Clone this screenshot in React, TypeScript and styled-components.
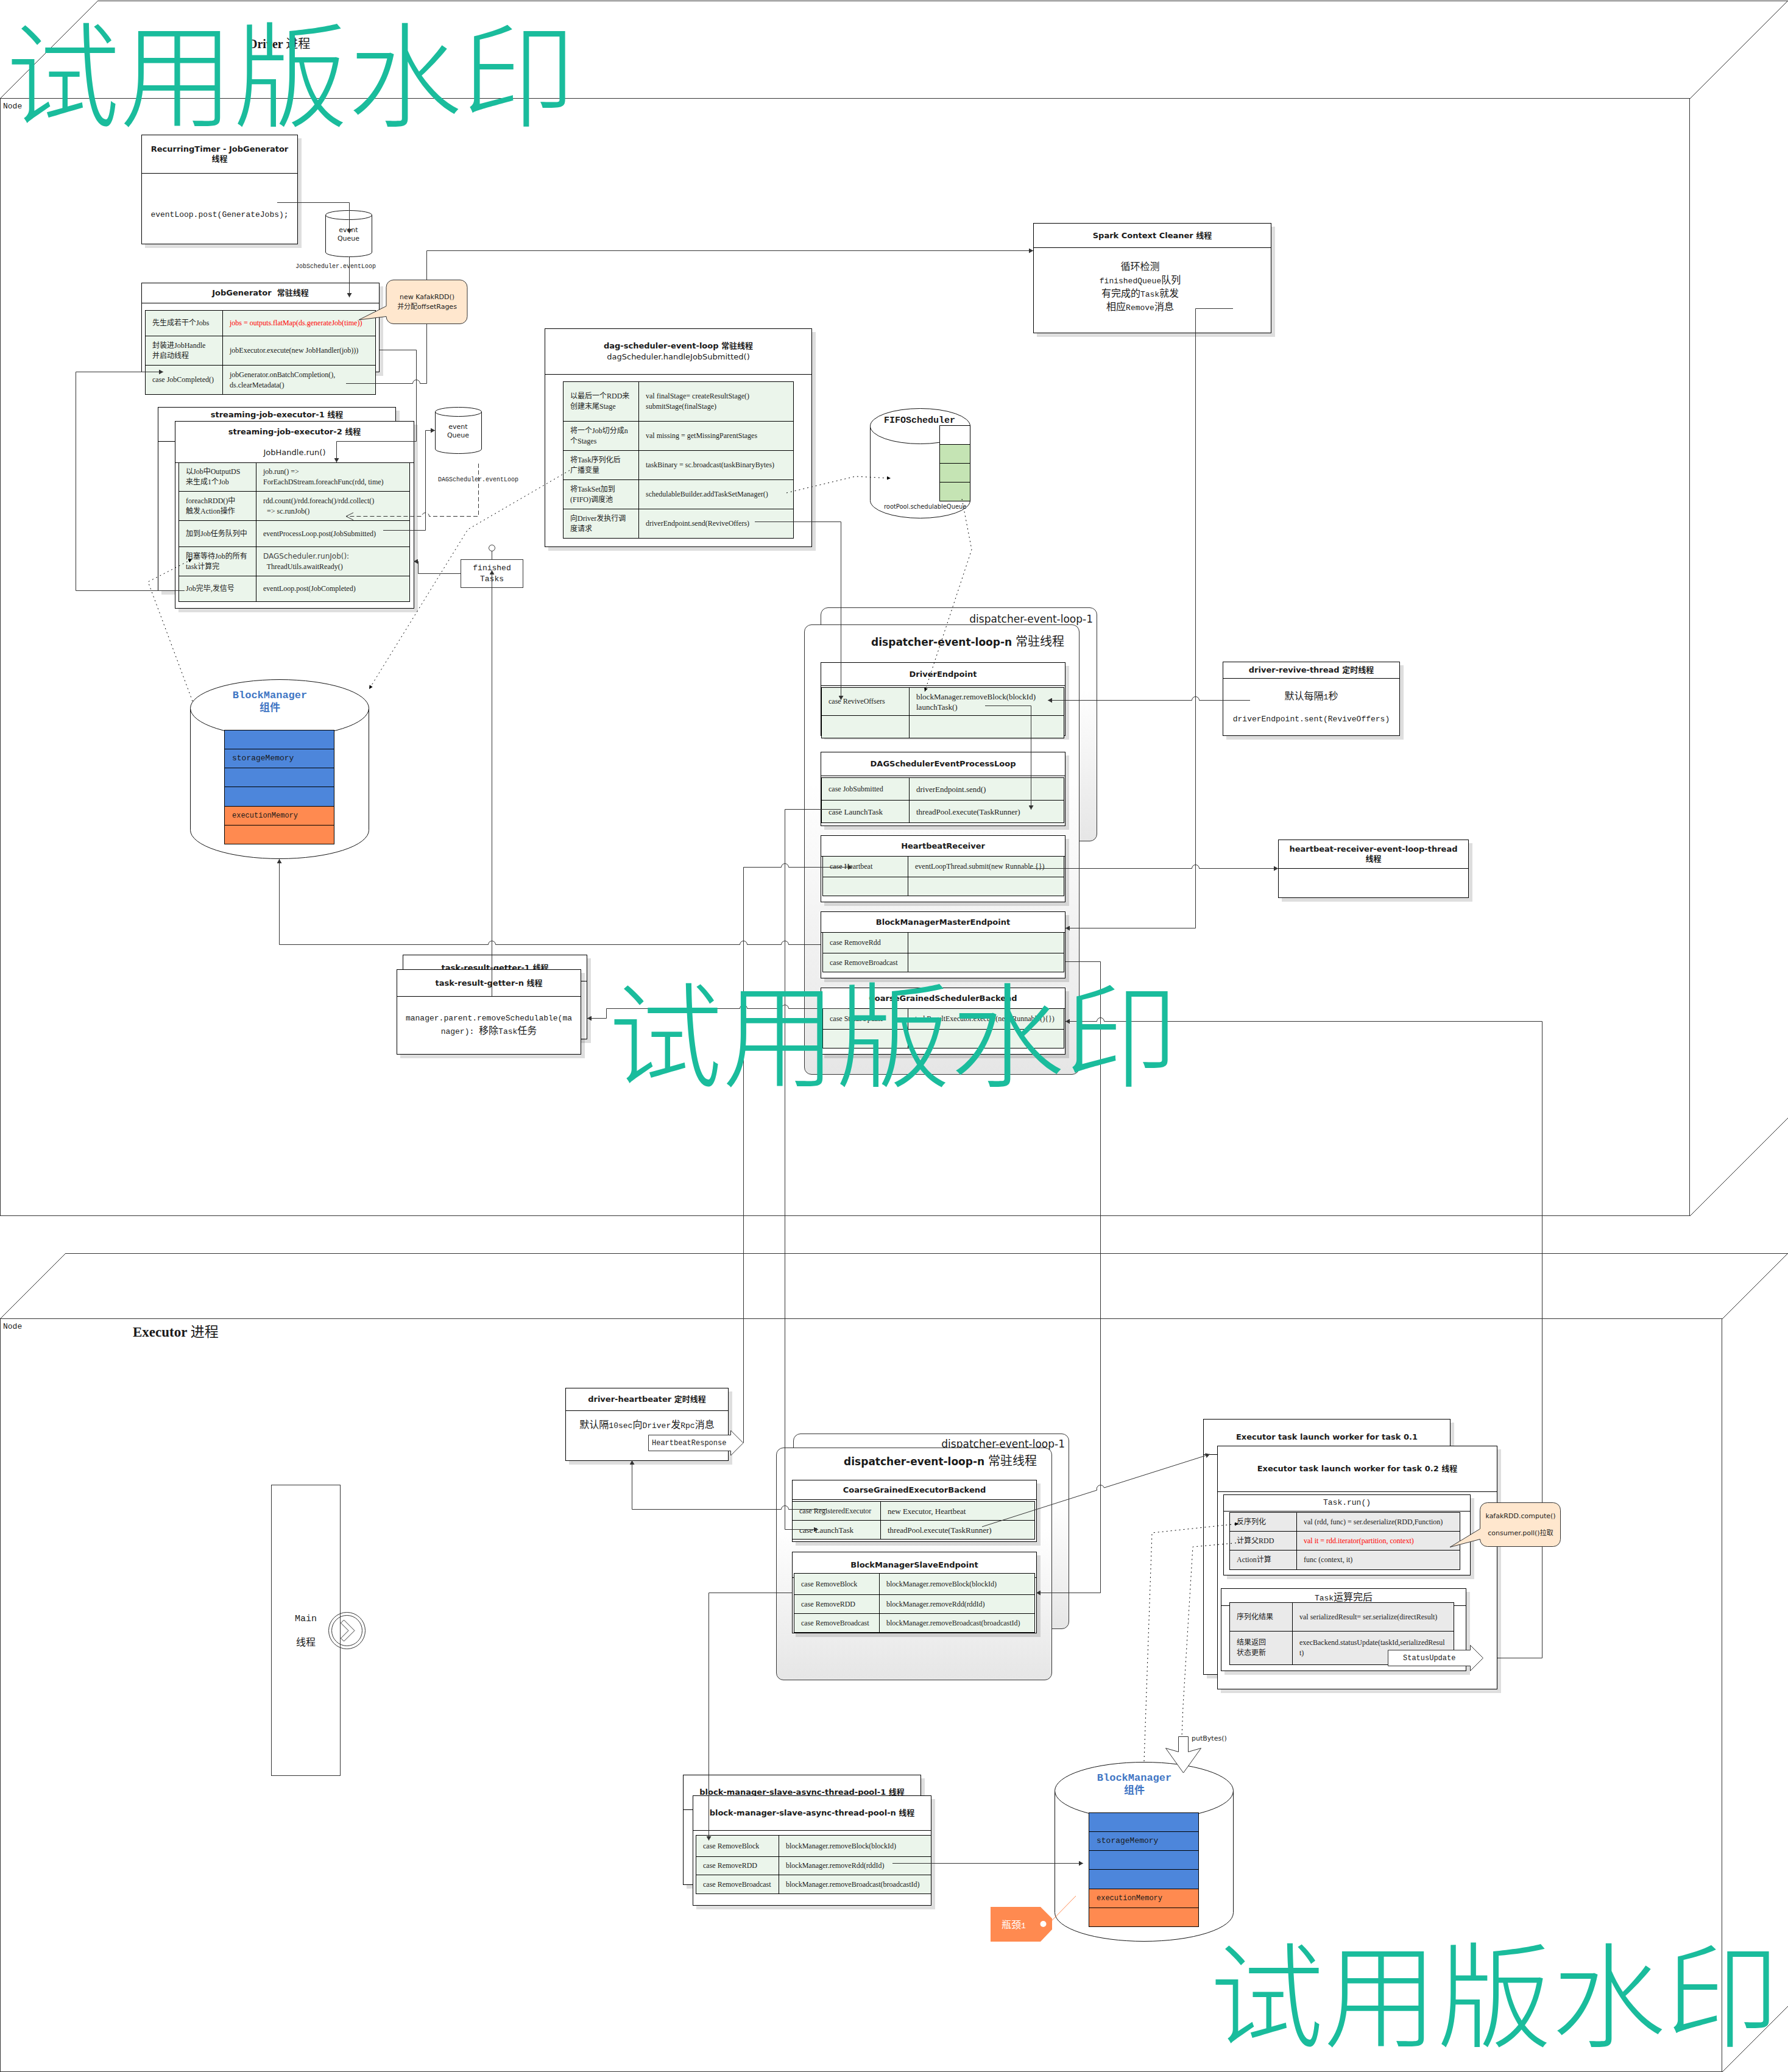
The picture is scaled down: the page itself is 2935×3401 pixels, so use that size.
import React, { ReactNode } from "react";
import styled, { createGlobalStyle, css } from "styled-components";

const ink = "#1a1a1a";
const wire = "#333333";
const mint = "#ebf5eb";
const grey = "#eaeaea";

const cjk = `"Noto Sans CJK SC"`;
const serif = `"Liberation Serif", ${cjk}, serif`;
const mono = `"Liberation Mono", ${cjk}, monospace`;
const sans = `"DejaVu Sans", ${cjk}, sans-serif`;

const GlobalStyle = createGlobalStyle`
  * { box-sizing: border-box; }
  body { margin: 0; background: #fff; color: ${ink}; overflow-x: auto; }
  h1, h2, h3, p { margin: 0; font-weight: normal; }
`;

type Box = { $x: number; $y: number; $w?: number; $h?: number };

const placed = css<Box>`
  position: absolute;
  left: ${(p) => p.$x}px;
  top: ${(p) => p.$y}px;
  ${(p) => p.$w !== undefined && `width: ${p.$w}px;`}
  ${(p) => p.$h !== undefined && `height: ${p.$h}px;`}
`;

/* ---------- process boxes drawn as cubes ---------- */

const Canvas = styled.main`
  position: relative;
  display: flex;
  flex-direction: column;
  gap: 60px;
  min-width: 2600px;
`;

const Cube = styled.section<{ $depth: number }>`
  position: relative;
  padding: ${(p) => p.$depth}px ${(p) => p.$depth}px 0 0;
`;

const Lid = styled.div<{ $depth: number }>`
  position: absolute;
  top: 1px;
  left: ${(p) => p.$depth}px;
  right: 0;
  border-top: 1px solid ${wire};
`;

const Front = styled.div<{ $h: number }>`
  height: ${(p) => p.$h}px;
  padding: 4px;
  border: 1px solid ${wire};
`;

const Slant = styled.svg<{ $side: "left" | "right"; $bottom?: boolean }>`
  position: absolute;
  ${(p) => (p.$side === "left" ? "left: 0;" : "right: 0;")}
  ${(p) => (p.$bottom ? "bottom: 0;" : "top: 1px;")}
`;

const NodeTag = styled.p`
  font: 13px/18px ${mono};
`;

const ProcessTitle = styled.h1<Box & { $size: number }>`
  ${placed}
  font: bold ${(p) => p.$size}px/28px ${serif};
  white-space: nowrap;
`;

const Plain = styled.span`
  font-weight: normal;
`;

function Process({ depth, height }: { depth: number; height: number }) {
  const edge = (
    <line x1="0" y1={depth} x2={depth} y2="0" stroke={wire} />
  );
  return (
    <Cube $depth={depth}>
      <Lid $depth={depth} />
      <Slant $side="left" width={depth} height={depth}>{edge}</Slant>
      <Slant $side="right" width={depth} height={depth}>{edge}</Slant>
      <Front $h={height}>
        <NodeTag>Node</NodeTag>
      </Front>
      <Slant $side="right" $bottom width={depth} height={depth}>{edge}</Slant>
    </Cube>
  );
}

/* ---------- text ---------- */

const Cn = styled.span<{ $size?: number }>`
  font-family: ${cjk}, sans-serif;
  font-size: ${(p) => p.$size ?? 16}px;
`;

const Label = styled.p<Box & { $font: string; $size: number; $line?: number; $align?: string; $bold?: boolean; $color?: string }>`
  ${placed}
  font-family: ${(p) => p.$font};
  font-size: ${(p) => p.$size}px;
  line-height: ${(p) => p.$line ?? 16}px;
  font-weight: ${(p) => (p.$bold ? "bold" : "normal")};
  text-align: ${(p) => p.$align ?? "center"};
  color: ${(p) => p.$color ?? ink};
  white-space: pre;
`;

/* ---------- class cards ---------- */

const CardBox = styled.article<Box>`
  ${placed}
  display: flex;
  flex-direction: column;
  background: #fff;
  border: 1px solid #000;
  box-shadow: 6px 6px 0 rgba(0, 0, 0, 0.13);
`;

const CardHead = styled.header<{ $h: number; $gap: number; $top?: boolean }>`
  display: flex;
  flex: none;
  flex-direction: column;
  align-items: center;
  justify-content: ${(p) => (p.$top ? "flex-start" : "center")};
  gap: ${(p) => p.$gap}px;
  height: ${(p) => p.$h}px;
  padding-top: ${(p) => (p.$top ? 4 : 0)}px;
  border-bottom: 1px solid #000;
  text-align: center;
  font: 13px/16px ${sans};
  white-space: pre;
`;

const CardTitle = styled.h3<{ $mono?: boolean }>`
  font: ${(p) => (p.$mono ? `13px/16px ${mono}` : `bold 13px/16px ${sans}`)};
`;

const CardBody = styled.div<{ $pad?: string; $top?: boolean }>`
  display: flex;
  flex: 1;
  flex-direction: column;
  align-items: center;
  justify-content: ${(p) => (p.$top ? "flex-start" : "center")};
  gap: 18px;
  padding: ${(p) => p.$pad ?? "0"};
  font: 13px/18px ${mono};
  text-align: center;
  white-space: pre;
`;

type CardProps = {
  x: number;
  y: number;
  w: number;
  h: number;
  head: number;
  title: ReactNode;
  sub?: string;
  gap?: number;
  topTitle?: boolean;
  monoTitle?: boolean;
  children?: ReactNode;
};

function Card(p: CardProps) {
  return (
    <CardBox $x={p.x} $y={p.y} $w={p.w} $h={p.h}>
      <CardHead $h={p.head} $gap={p.gap ?? 2} $top={p.topTitle}>
        <CardTitle $mono={p.monoTitle}>{p.title}</CardTitle>
        {p.sub && <p>{p.sub}</p>}
      </CardHead>
      {p.children}
    </CardBox>
  );
}

/* ---------- step tables ---------- */

const Grid = styled.table<{ $w: number; $left: number; $top: number; $fill: string }>`
  flex: none;
  width: ${(p) => p.$w}px;
  margin: ${(p) => p.$top}px 0 0 ${(p) => p.$left}px;
  table-layout: fixed;
  border-collapse: separate;
  border-spacing: 0;
  border: solid #000;
  border-width: 1px 0 0 1px;
  background: ${(p) => p.$fill};
`;

const Row = styled.tr<{ $h: number }>`
  height: ${(p) => p.$h}px;
`;

const Cell = styled.td<{ $w?: number; $big?: boolean; $red?: boolean; $sansFirst?: boolean }>`
  ${(p) => p.$w !== undefined && `width: ${p.$w}px;`}
  padding: 0 0 0 11px;
  border: solid #000;
  border-width: 0 1px 1px 0;
  font: ${(p) => (p.$big ? 13 : 12)}px/17px ${serif};
  color: ${(p) => (p.$red ? "#ff0000" : ink)};
  vertical-align: middle;
  white-space: pre;
  ${(p) => p.$sansFirst && `&::first-line { font-family: "DejaVu Sans", sans-serif; color: #444; }`}
`;

type Step = { h: number; a?: string; b?: string; bigA?: boolean; bigB?: boolean; red?: boolean; sansFirst?: boolean };

function Steps({ w, col, left = 0, top = 0, fill = mint, rows }: { w: number; col: number; left?: number; top?: number; fill?: string; rows: Step[] }) {
  return (
    <Grid $w={w} $left={left} $top={top} $fill={fill}>
      <tbody>
        {rows.map((r, i) => (
          <Row key={i} $h={r.h}>
            <Cell $w={col} $big={r.bigA}>{r.a}</Cell>
            <Cell $big={r.bigB} $red={r.red} $sansFirst={r.sansFirst}>{r.b}</Cell>
          </Row>
        ))}
      </tbody>
    </Grid>
  );
}

/* ---------- dispatcher groups ---------- */

const Group = styled.section<Box & { $pad: string }>`
  ${placed}
  padding: ${(p) => p.$pad};
  border: 1px solid ${wire};
  border-radius: 12px;
  background: linear-gradient(#fff 35%, #e6e6e6);
  text-align: right;
  white-space: nowrap;
`;

const GroupTitle = styled.h2<{ $bold?: boolean }>`
  font: ${(p) => (p.$bold ? "bold" : "normal")} 17px/24px ${sans};
`;

/* ---------- cylinders and memory racks ---------- */

const Shape = styled.svg<Box>`
  ${placed}
  overflow: visible;
`;

function Cylinder({ x, y, w, h, ry }: { x: number; y: number; w: number; h: number; ry: number }) {
  const rx = w / 2;
  return (
    <Shape $x={x} $y={y} $w={w} $h={h} viewBox={`-0.5 -0.5 ${w} ${h}`} fill="#fff" stroke="#111">
      <path d={`M0 ${ry} V${h - ry} A${rx} ${ry} 0 0 0 ${w} ${h - ry} V${ry}`} />
      <ellipse cx={rx} cy={ry} rx={rx} ry={ry} />
    </Shape>
  );
}

const Rack = styled.div<Box>`
  ${placed}
  display: grid;
  grid-auto-rows: 1fr;
  border: solid #000;
  border-width: 1px 1px 0;
`;

const Slot = styled.div<{ $fill: string; $size?: number }>`
  display: flex;
  align-items: center;
  padding-left: 12px;
  border-bottom: 1px solid #000;
  background: ${(p) => p.$fill};
  font: ${(p) => p.$size ?? 13}px/16px ${mono};
`;

const blue = "#4d86db";
const orange = "#ff8a50";

function BlockManager({ x, y }: { x: number; y: number }) {
  return (
    <>
      <Cylinder x={x} y={y} w={293} h={294} ry={47} />
      <Label $x={x + 31} $y={y + 18} $w={200} $font={mono} $size={17} $line={18} $bold $color="#3f76c4">
        BlockManager{"\n"}<Cn $size={17}>组件</Cn>
      </Label>
      <Rack $x={x + 56} $y={y + 83} $w={181} $h={188}>
        <Slot $fill={blue} />
        <Slot $fill={blue}>storageMemory</Slot>
        <Slot $fill={blue} />
        <Slot $fill={blue} />
        <Slot $fill={orange} $size={12}>executionMemory</Slot>
        <Slot $fill={orange} />
      </Rack>
    </>
  );
}

function Queue({ x, y }: { x: number; y: number }) {
  return (
    <>
      <Cylinder x={x} y={y} w={76} h={76} ry={7.5} />
      <Label $x={x} $y={y + 26} $w={76} $font={sans} $size={11} $line={14}>{"event\nQueue"}</Label>
    </>
  );
}

const Frame = styled.div<Box & { $gap?: number }>`
  ${placed}
  display: flex;
  flex-direction: column;
  align-items: center;
  justify-content: center;
  gap: ${(p) => p.$gap ?? 0}px;
  border: 1px solid ${wire};
  background: #fff;
  font: 13px/18px ${mono};
  text-align: center;
  white-space: pre;
`;

const MainWord = styled.p`
  font-size: 15px;
`;

/* ---------- overlays ---------- */

const Wires = styled.svg`
  position: absolute;
  inset: 0;
  width: 100%;
  height: 100%;
  pointer-events: none;
`;

const Watermark = styled.p<Box>`
  ${placed}
  color: #1abc9c;
  font: 300 187px/210px ${cjk}, sans-serif;
  white-space: nowrap;
  pointer-events: none;
`;

const solid = [
  "M455 332.5 H573.5 V383",
  "M573.5 422 V488",
  "M303 969.5 H124.5 V610.5 H268",
  "M623 574.5 H683.5 V724.5 H552.5 V759",
  "M568 629.5 H677.5 a6 6 0 0 1 12 0 H700.5 V411.5 H1696",
  "M629 870.5 H698.5 V706.5 H714",
  "M756 941.5 H686.5 V921.5 H679",
  "M807.5 1635 V936",
  "M1239 856.5 H1380.5 V1149",
  "M1617 1158.5 H1692.5 V1329",
  "M2052 1149.5 H1968.5 a6 6 0 0 0 -12 0 H1720",
  "M1380 1328.5 H1288.5 V2510.5 H1343",
  "M1220.5 2368 V1423.5 H1282.5 a6 6 0 0 1 12 0 H1399",
  "M1690 1425.5 H1956.5 a6 6 0 0 1 12 0 H2098",
  "M1347 1550.5 H1294.5 a6 6 0 0 0 -12 0 H1226.5 a6 6 0 0 0 -12 0 H813.5 a6 6 0 0 0 -12 0 H458.5 V1410",
  "M2024 506.5 H1962.5 V1523.5 H1749",
  "M1749 1578.5 H1806.5 V2614.5 H1701",
  "M2458 2721.5 H2531.5 V1676.5 H1812.5 a6 6 0 0 0 -12 0 H1749",
  "M1392 1655.5 H1294.5 a6 6 0 0 0 -12 0 H1226.5 a6 6 0 0 0 -12 0 H995.5 V1671.5 H964",
  "M1357 2477.5 H1294.5 a6 6 0 0 0 -12 0 H1037.5 V2397",
  "M1300 2614.5 H1163.5 V3021",
  "M1612 2506 L1800.5 2446 a6 6 0 0 1 12 -4 L1986 2387",
  "M1465 3058.5 H1778",
];

const dotted = [
  "M935 772 L768 869 L606 1131",
  "M1291 809 L1404 782 L1462 785",
  "M1579 819 L1595 902 L1518 1135",
  "M316 1151 L243 955 L315 918",
  "M1878 2891 L1891 2516 L2033 2501",
];

export default function App() {
  return (
    <>
      <GlobalStyle />
      <Canvas>
        <Process depth={161} height={1835} />
        <Process depth={108} height={1237} />

        <ProcessTitle $x={408} $y={58} $size={20}>Driver <Plain>进程</Plain></ProcessTitle>
        <ProcessTitle $x={218} $y={2173} $size={23}>Executor <Plain>进程</Plain></ProcessTitle>

        {/* driver: job generation */}
        <Card x={232} y={221} w={257} h={180} head={63} title={"RecurringTimer - JobGenerator\n线程"}>
          <CardBody $pad="20px 0 0">eventLoop.post(GenerateJobs);</CardBody>
        </Card>
        <Queue x={534} y={345} />
        <Label $x={485} $y={430} $font={mono} $size={10}>JobScheduler.eventLoop</Label>

        <Card x={232} y={464} w={391} h={147} head={33} title="JobGenerator  常驻线程">
          <Steps w={379} col={127} left={5} top={11} rows={[
            { h: 42, a: "先生成若干个Jobs", b: "jobs = outputs.flatMap(ds.generateJob(time))", red: true },
            { h: 48, a: "封装进JobHandle\n并启动线程", b: "jobExecutor.execute(new JobHandler(job)))" },
            { h: 48, a: "case JobCompleted()", b: "jobGenerator.onBatchCompletion(),\nds.clearMetadata()" },
          ]} />
        </Card>

        <Card x={259} y={668} w={391} h={302} head={56} topTitle title="streaming-job-executor-1 线程" />
        <Card x={287} y={691} w={393} h={308} head={68} gap={18} title="streaming-job-executor-2 线程" sub="JobHandle.run()">
          <Steps w={380} col={127} left={5} top={-1} rows={[
            { h: 47, a: "以Job中OutputDS\n来生成1个Job", b: "job.run() =>\nForEachDStream.foreachFunc(rdd, time)" },
            { h: 48, a: "foreachRDD()中\n触发Action操作", b: "rdd.count()/rdd.foreach()/rdd.collect()\n  => sc.runJob()" },
            { h: 43, a: "加到Job任务队列中", b: "eventProcessLoop.post(JobSubmitted)" },
            { h: 48, a: "阻塞等待Job的所有\ntask计算完", b: "DAGScheduler.runJob():\n  ThreadUtils.awaitReady()", sansFirst: true },
            { h: 42, a: "Job完毕,发信号", b: "eventLoop.post(JobCompleted)" },
          ]} />
        </Card>
        <Queue x={714} y={668} />
        <Label $x={719} $y={780} $font={mono} $size={10}>DAGScheduler.eventLoop</Label>
        <Frame $x={756} $y={918} $w={103} $h={47}>{"finished\nTasks"}</Frame>

        {/* driver: dag scheduler */}
        <Card x={894} y={539} w={439} h={359} head={75} title="dag-scheduler-event-loop 常驻线程" sub="dagScheduler.handleJobSubmitted()">
          <Steps w={379} col={124} left={29} top={11} rows={[
            { h: 65, a: "以最后一个RDD来\n创建末尾Stage", b: "val finalStage= createResultStage()\nsubmitStage(finalStage)" },
            { h: 48, a: "将一个Job切分成n\n个Stages", b: "val missing = getMissingParentStages" },
            { h: 48, a: "将Task序列化后\n广播变量", b: "taskBinary = sc.broadcast(taskBinaryBytes)" },
            { h: 48, a: "将TaskSet加到\n(FIFO)调度池", b: "schedulableBuilder.addTaskSetManager()" },
            { h: 48, a: "向Driver发执行调\n度请求", b: "driverEndpoint.send(ReviveOffers)" },
          ]} />
        </Card>

        <Cylinder x={1428} y={670} w={164} h={180} ry={29} />
        <Label $x={1451} $y={683} $font={mono} $size={15} $bold>FIFOScheduler</Label>
        <Rack $x={1542} $y={698} $w={51} $h={125}>
          <Slot $fill="#fff" />
          <Slot $fill="#c5e4b4" />
          <Slot $fill="#c5e4b4" />
          <Slot $fill="#c5e4b4" />
        </Rack>
        <Label $x={1451} $y={824} $font={`"DejaVu Sans Condensed", "DejaVu Sans", sans-serif`} $size={11}>rootPool.schedulableQueue</Label>

        <Card x={1696} y={366} w={391} h={181} head={40} title="Spark Context Cleaner 线程">
          <CardBody $pad="0 40px 12px 0">
            <p>
              <Cn>循环检测</Cn>{"\n"}finishedQueue<Cn>队列</Cn>{"\n"}<Cn>有完成的</Cn>Task<Cn>就发</Cn>{"\n"}<Cn>相应</Cn>Remove<Cn>消息</Cn>
            </p>
          </CardBody>
        </Card>

        {/* driver: dispatcher */}
        <Group $x={1347} $y={997} $w={454} $h={384} $pad="6px">
          <GroupTitle>dispatcher-event-loop-1</GroupTitle>
        </Group>
        <Group $x={1320} $y={1025} $w={452} $h={739} $pad="14px 24px">
          <GroupTitle $bold>dispatcher-event-loop-n <Plain><Cn $size={20}>常驻线程</Cn></Plain></GroupTitle>
        </Group>
        <Card x={1347} y={1087} w={402} h={121} head={38} title="DriverEndpoint">
          <Steps w={399} col={144} top={2} rows={[
            { h: 46, a: "case ReviveOffsers", b: "blockManager.removeBlock(blockId)\nlaunchTask()", bigB: true },
            { h: 37 },
          ]} />
        </Card>
        <Card x={1347} y={1234} w={402} h={122} head={39} title="DAGSchedulerEventProcessLoop">
          <Steps w={399} col={144} top={2} rows={[
            { h: 37, a: "case JobSubmitted", b: "driverEndpoint.send()", bigB: true },
            { h: 37, a: "case LaunchTask", b: "threadPool.execute(TaskRunner)", bigA: true, bigB: true },
          ]} />
        </Card>
        <Card x={1347} y={1371} w={402} h={110} head={34} title="HeartbeatReceiver">
          <Steps w={397} col={140} left={2} top={-1} rows={[
            { h: 34, a: "case Heartbeat", b: "eventLoopThread.submit(new Runnable {})" },
            { h: 31 },
          ]} />
        </Card>
        <Card x={1347} y={1496} w={402} h={110} head={34} title="BlockManagerMasterEndpoint">
          <Steps w={397} col={140} left={2} top={-1} rows={[
            { h: 34, a: "case RemoveRdd" },
            { h: 31, a: "case RemoveBroadcast" },
          ]} />
        </Card>
        <Card x={1347} y={1621} w={402} h={110} head={34} title="CoarseGrainedSchedulerBackend">
          <Steps w={397} col={140} left={2} top={-1} rows={[
            { h: 34, a: "case StatusUpdate", b: "taskResultExecutor.execute(new Runnable(){})" },
            { h: 31 },
          ]} />
        </Card>

        <Card x={2007} y={1086} w={291} h={122} head={27} title="driver-revive-thread 定时线程">
          <CardBody>
            <p><Cn>默认每隔</Cn>1<Cn>秒</Cn></p>
            <p>driverEndpoint.sent(ReviveOffers)</p>
          </CardBody>
        </Card>
        <Card x={2098} y={1378} w={313} h={96} head={47} title={"heartbeat-receiver-event-loop-thread\n线程"} />

        <BlockManager x={312} y={1115} />

        <Card x={661} y={1567} w={303} h={139} head={43} title="task-result-getter-1 线程" />
        <Card x={651} y={1591} w={303} h={140} head={44} title="task-result-getter-n 线程">
          <CardBody>
            <p>{"manager.parent.removeSchedulable(ma\nnager): "}<Cn>移除</Cn>Task<Cn>任务</Cn></p>
          </CardBody>
        </Card>

        {/* executor */}
        <Frame $x={445} $y={2437} $w={114} $h={478} $gap={18}>
          <MainWord>Main</MainWord>
          <Cn>线程</Cn>
        </Frame>

        <Card x={928} y={2278} w={268} h={120} head={37} title="driver-heartbeater 定时线程">
          <CardBody $top $pad="12px 0 0">
            <p><Cn>默认隔</Cn>10sec<Cn>向</Cn>Driver<Cn>发</Cn>Rpc<Cn>消息</Cn></p>
          </CardBody>
        </Card>

        <Group $x={1302} $y={2353} $w={453} $h={321} $pad="4px 6px">
          <GroupTitle>dispatcher-event-loop-1</GroupTitle>
        </Group>
        <Group $x={1274} $y={2376} $w={453} $h={382} $pad="8px 24px">
          <GroupTitle $bold>dispatcher-event-loop-n <Plain><Cn $size={20}>常驻线程</Cn></Plain></GroupTitle>
        </Group>
        <Card x={1300} y={2429} w={402} h={102} head={32} title="CoarseGrainedExecutorBackend">
          <Steps w={399} col={145} left={-1} top={2} rows={[
            { h: 31, a: "case RegisteredExecutor", b: "new Executor, Heartbeat", bigB: true },
            { h: 31, a: "case LaunchTask", b: "threadPool.execute(TaskRunner)", bigA: true, bigB: true },
          ]} />
        </Card>
        <Card x={1300} y={2547} w={402} h={134} head={42} title="BlockManagerSlaveEndpoint">
          <Steps w={396} col={140} left={2} top={-8} rows={[
            { h: 35, a: "case RemoveBlock", b: "blockManager.removeBlock(blockId)" },
            { h: 31, a: "case RemoveRDD", b: "blockManager.removeRdd(rddId)" },
            { h: 31, a: "case RemoveBroadcast", b: "blockManager.removeBroadcast(broadcastId)" },
          ]} />
        </Card>

        <Card x={1975} y={2329} w={406} h={420} head={58} title="Executor task launch worker for task 0.1" />
        <Card x={1998} y={2373} w={460} h={400} head={75} title="Executor task launch worker for task 0.2 线程" />
        <Card x={2008} y={2453} w={406} h={133} head={27} monoTitle title="Task.run()">
          <Steps w={379} col={110} left={9} top={1} fill={grey} rows={[
            { h: 31, a: "反序列化", b: "val (rdd, func) = ser.deserialize(RDD,Function)" },
            { h: 31, a: "计算父RDD", b: "val it = rdd.iterator(partition, context)", red: true },
            { h: 32, a: "Action计算", b: "func (context, it)" },
          ]} />
        </Card>
        <Card x={2004} y={2607} w={403} h={136} head={28} monoTitle title={<>Task<Cn>运算完后</Cn></>}>
          <Steps w={369} col={103} left={13} top={-6} fill={grey} rows={[
            { h: 47, a: "序列化结果", b: "val serializedResult= ser.serialize(directResult)" },
            { h: 55, a: "结果返回\n状态更新", b: "execBackend.statusUpdate(taskId,serializedResul\nt)" },
          ]} />
        </Card>

        <Card x={1121} y={2913} w={391} h={181} head={57} title="block-manager-slave-async-thread-pool-1 线程" />
        <Card x={1137} y={2947} w={392} h={181} head={57} title="block-manager-slave-async-thread-pool-n 线程">
          <Steps w={387} col={136} left={4} top={7} rows={[
            { h: 35, a: "case RemoveBlock", b: "blockManager.removeBlock(blockId)" },
            { h: 30, a: "case RemoveRDD", b: "blockManager.removeRdd(rddId)" },
            { h: 31, a: "case RemoveBroadcast", b: "blockManager.removeBroadcast(broadcastId)" },
          ]} />
        </Card>

        <BlockManager x={1731} y={2892} />
        <Label $x={1956} $y={2846} $font={sans} $size={11}>putBytes()</Label>

        <Wires fill="none" stroke={wire}>
          <defs>
            <marker id="tip" markerUnits="userSpaceOnUse" markerWidth="8" markerHeight="8" refX="7" refY="4" orient="auto">
              <path d="M0 0 L7 4 L0 8 Z" fill={wire} stroke="none" />
            </marker>
            <marker id="dot-tip" markerUnits="userSpaceOnUse" markerWidth="8" markerHeight="8" refX="6" refY="3" orient="auto">
              <path d="M0 0 L6 3 L0 6 Z" fill="#000" stroke="none" />
            </marker>
          </defs>
          {solid.map((d) => (
            <path key={d} d={d} markerEnd="url(#tip)" />
          ))}
          {dotted.map((d) => (
            <path key={d} d={d} stroke="#000" strokeDasharray="2 5" markerEnd="url(#dot-tip)" />
          ))}
          <path d="M2036 2532 L1958 2539 L1942 2800 L1940 2850" stroke="#000" strokeDasharray="2 5" />
          <path d="M785.5 761 V847.5 H704.5 a6 6 0 0 0 -12 0 H568" strokeDasharray="7 4" />
          <path d="M580 841.5 L568 847.5 L580 853.5" />
          <circle cx="807.5" cy="899.5" r="5" fill="#fff" />
          <path d="M807.5 904.5 V918" />

          {/* start button of the main thread */}
          <circle cx="569.5" cy="2676.5" r="30" />
          <circle cx="569.5" cy="2676.5" r="25" />
          <path d="M559.5 2664 L564.5 2659 L582 2676.5 L564.5 2694 L559.5 2689 L572 2676.5 Z" />

          {/* block arrows */}
          <path d="M1064.5 2355.5 H1199.5 V2348 L1220 2368.5 L1199.5 2389 V2381.5 H1064.5 Z" fill="#fff" />
          <path d="M2278.5 2708.5 H2413.5 V2700.5 L2434.5 2721.5 L2413.5 2742.5 V2734.5 H2278.5 Z" fill="#fff" />
          <path d="M1934.5 2850.5 H1950.5 V2875.5 L1971.5 2869.5 L1942.5 2910 L1913.5 2869.5 L1934.5 2875.5 Z" fill="#fff" />

          {/* speech balloons */}
          <path d="M646 459.5 H755 a12 12 0 0 1 12 12 V519.5 a12 12 0 0 1 -12 12 H646 a12 12 0 0 1 -12 -12 L589 525 L634 502.5 V471.5 a12 12 0 0 1 12 -12 Z" fill="#ffe7ce" />
          <path d="M2441.5 2466.5 H2549.5 a12 12 0 0 1 12 12 V2526.5 a12 12 0 0 1 -12 12 H2441.5 a12 12 0 0 1 -12 -12 L2380 2539.5 L2429.5 2509.5 V2478.5 a12 12 0 0 1 12 -12 Z" fill="#ffe7ce" />

          {/* bottleneck tag */}
          <path d="M1727 3152 L1766 3112" stroke={orange} />
          <path d="M1626 3130 H1708 L1727 3149 V3167 L1708 3187 H1626 Z" fill={orange} stroke="none" />
          <circle cx="1712.5" cy="3158" r="5" fill="#fff" stroke="none" />
        </Wires>

        <Label $x={634} $y={480} $w={134} $font={sans} $size={11}>{"new KafakRDD()\n并分配offsetRages"}</Label>
        <Label $x={2430} $y={2475} $w={132} $font={sans} $size={11} $line={28}>{"kafakRDD.compute()\nconsumer.poll()拉取"}</Label>
        <Label $x={1070} $y={2361} $font={mono} $size={12}>HeartbeatResponse</Label>
        <Label $x={2303} $y={2714} $font={mono} $size={12}>StatusUpdate</Label>
        <Label $x={1644} $y={3149} $font={mono} $size={13} $line={18} $color="#fff"><Cn>瓶颈</Cn>1</Label>

        <Watermark $x={10} $y={8}>试用版水印</Watermark>
        <Watermark $x={999} $y={1584}>试用版水印</Watermark>
        <Watermark $x={1986} $y={3160}>试用版水印</Watermark>
      </Canvas>
    </>
  );
}
